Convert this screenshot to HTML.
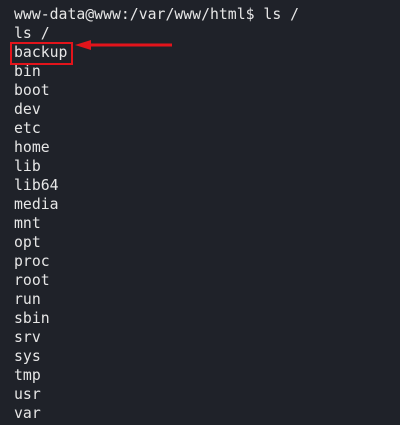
<!DOCTYPE html>
<html><head><style>
body{margin:0;width:400px;height:425px;background:#1f2229;overflow:hidden;position:relative}
pre{position:absolute;left:14px;top:5px;margin:0;font-family:"DejaVu Sans Mono","Liberation Mono",monospace;font-size:14.8px;line-height:19px;color:#e6e6e6}
.box{position:absolute;left:10px;top:42px;width:59px;height:19px;border:2px solid #e3141b}
</style></head><body>
<pre>www-data@www:/var/www/html$ ls /
ls /
backup
bin
boot
dev
etc
home
lib
lib64
media
mnt
opt
proc
root
run
sbin
srv
sys
tmp
usr
var</pre>
<div class="box"></div>
<svg style="position:absolute;left:0;top:0" width="400" height="425">
<line x1="88" y1="45" x2="172" y2="45" stroke="#e3141b" stroke-width="3"/>
<polygon points="75,45 91,40 91,50" fill="#e3141b"/>
</svg>
</body></html>
